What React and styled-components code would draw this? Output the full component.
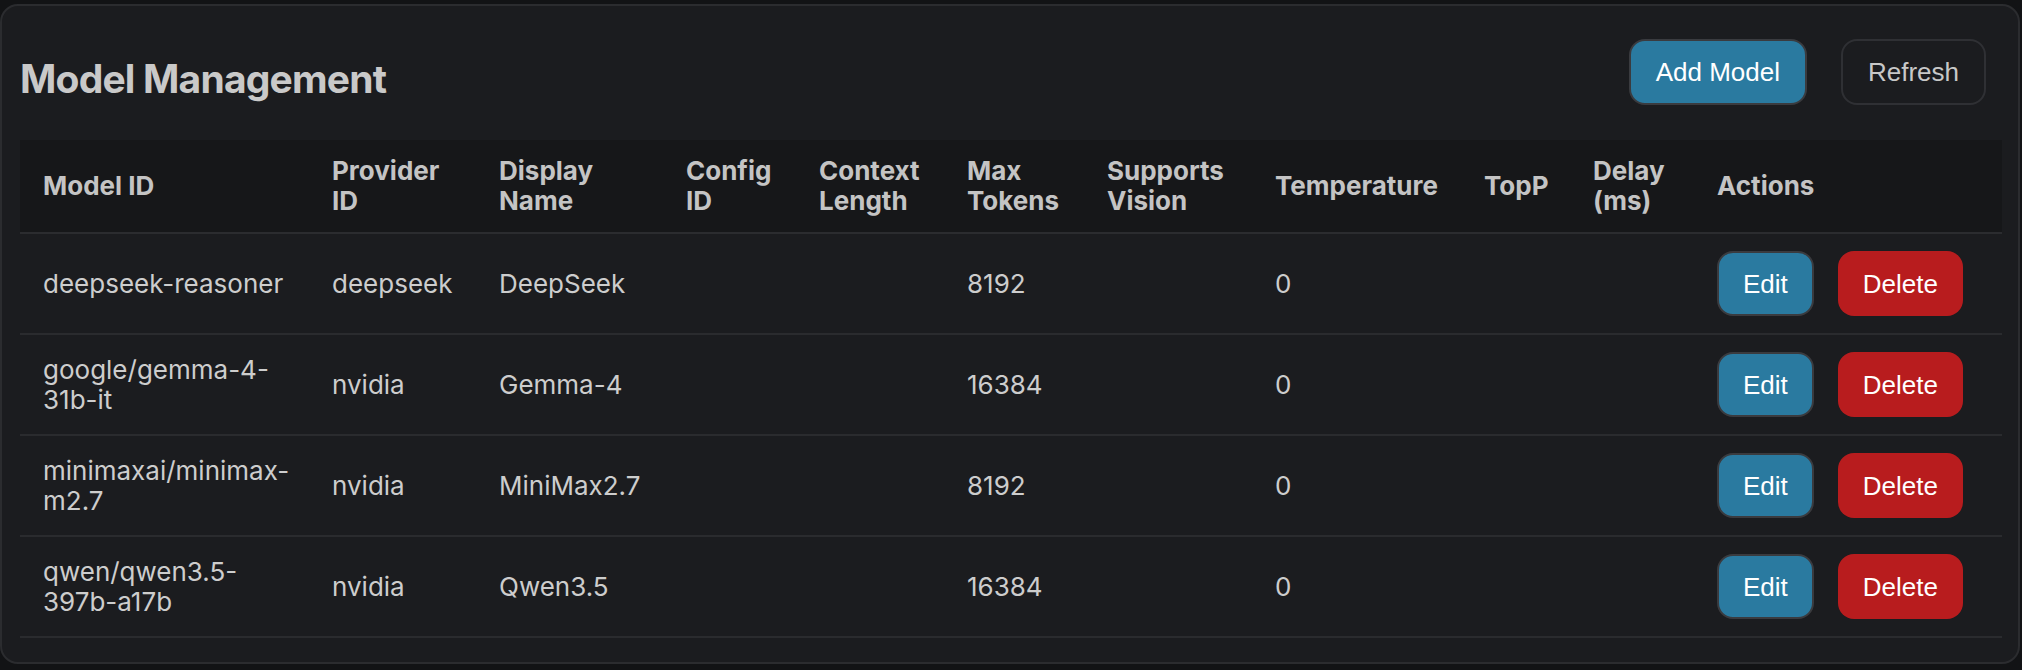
import { Fragment } from 'react';
import styled, { createGlobalStyle } from 'styled-components';

// Dados dos modelos exibidos na tabela
const models = [
  { id: 'deepseek-reasoner', provider: 'deepseek', name: 'DeepSeek', maxTokens: 8192, temperature: 0 },
  { id: 'google/gemma-4-31b-it', provider: 'nvidia', name: 'Gemma-4', maxTokens: 16384, temperature: 0 },
  { id: 'minimaxai/minimax-m2.7', provider: 'nvidia', name: 'MiniMax2.7', maxTokens: 8192, temperature: 0 },
  { id: 'qwen/qwen3.5-397b-a17b', provider: 'nvidia', name: 'Qwen3.5', maxTokens: 16384, temperature: 0 },
];

// Colunas: largura fixa + rótulo do cabeçalho
const columns = [
  { key: 'id', label: 'Model ID', width: 289 },
  { key: 'provider', label: 'Provider\nID', width: 167 },
  { key: 'name', label: 'Display\nName', width: 187 },
  { key: 'configId', label: 'Config\nID', width: 133 },
  { key: 'contextLength', label: 'Context\nLength', width: 148 },
  { key: 'maxTokens', label: 'Max\nTokens', width: 140 },
  { key: 'vision', label: 'Supports\nVision', width: 168 },
  { key: 'temperature', label: 'Temperature', width: 209 },
  { key: 'topP', label: 'TopP', width: 109 },
  { key: 'delay', label: 'Delay\n(ms)', width: 124 },
  { key: 'actions', label: 'Actions', width: 308 },
];

const GlobalStyle = createGlobalStyle`
  html, body {
    margin: 0;
    padding: 0;
    background: #121315;
  }
  body {
    font-family: Inter, "Noto Sans", sans-serif;
  }
`;

const Page = styled.div`
  width: 2022px;
  height: 670px;
  box-sizing: border-box;
  padding-top: 4px;
  background: #121315;
`;

const Card = styled.section`
  width: 2020px;
  box-sizing: border-box;
  background: #1b1c1f;
  border: 2px solid #2b2c2f;
  border-radius: 18px;
  padding: 33px 16px 24px 18px;
`;

const Toolbar = styled.div`
  display: flex;
  align-items: center;
  justify-content: space-between;
  height: 66px;
  padding-right: 16px;
`;

const Title = styled.h2`
  margin: 12px 0 0;
  font-size: 39px;
  line-height: 47px;
  font-weight: 700;
  letter-spacing: -0.8px;
  color: #c9c9c9;
`;

const ButtonGroup = styled.div`
  display: flex;
  gap: ${(p) => p.$gap}px;
`;

const variants = {
  primary: `
    background: #2a7aa0;
    border: 2px solid #3a3b3f;
    color: #ffffff;
  `,
  danger: `
    background: #b81c1e;
    border: none;
    color: #ffffff;
  `,
  ghost: `
    background: transparent;
    border: 2px solid #2f3034;
    color: #c8c8c8;
  `,
};

const Button = styled.button`
  font-family: "Liberation Sans", Arial, sans-serif;
  font-size: 26px;
  line-height: 30px;
  padding: ${(p) => p.$pad};
  border-radius: 16px;
  cursor: pointer;
  white-space: nowrap;
  ${(p) => variants[p.$variant]}
`;

const Table = styled.table`
  width: 1982px;
  margin-top: 35px;
  border-collapse: collapse;
  table-layout: fixed;
`;

const HeadCell = styled.th`
  background: #161719;
  text-align: left;
  vertical-align: middle;
  padding: 16px 23px;
  font-size: 26px;
  line-height: 30px;
  font-weight: 700;
  color: #c4c4c4;
  white-space: pre-line;
  border-bottom: 2px solid #2b2c2f;
`;

const Cell = styled.td`
  vertical-align: middle;
  padding: 17px ${(p) => (p.$wide ? 18 : 23)}px 17px 23px;
  font-size: 26px;
  line-height: 30px;
  color: #cdcdcd;
  border-bottom: 2px solid #2a2b2e;
`;

const Chunk = styled.span`
  white-space: nowrap;
`;

// quebra o id só depois dos hífens
const ModelId = ({ id }) =>
  id.split(/(?<=-)/).map((part, i) => (
    <Fragment key={i}>
      {i > 0 && <wbr />}
      <Chunk>{part}</Chunk>
    </Fragment>
  ));

const App = () => {
  return (
    <Page>
      <GlobalStyle />
      <Card>
        <Toolbar>
          <Title>Model Management</Title>
          <ButtonGroup $gap={34}>
            <Button $variant="primary" $pad="16px 25px">Add Model</Button>
            <Button $variant="ghost" $pad="16px 25px">Refresh</Button>
          </ButtonGroup>
        </Toolbar>

        <Table>
          <colgroup>
            {columns.map((col) => (
              <col key={col.key} style={{ width: col.width }} />
            ))}
          </colgroup>
          <thead>
            <tr>
              {columns.map((col) => (
                <HeadCell key={col.key}>{col.label}</HeadCell>
              ))}
            </tr>
          </thead>
          <tbody>
            {models.map((model) => (
              <tr key={model.id}>
                <Cell $wide>
                  <ModelId id={model.id} />
                </Cell>
                <Cell>{model.provider}</Cell>
                <Cell>{model.name}</Cell>
                <Cell />
                <Cell />
                <Cell>{model.maxTokens}</Cell>
                <Cell />
                <Cell>{model.temperature}</Cell>
                <Cell />
                <Cell />
                <Cell>
                  <ButtonGroup $gap={24}>
                    <Button $variant="primary" $pad="15.5px 24px">Edit</Button>
                    <Button $variant="danger" $pad="16.5px 25px">Delete</Button>
                  </ButtonGroup>
                </Cell>
              </tr>
            ))}
          </tbody>
        </Table>
      </Card>
    </Page>
  );
};

export default App;
